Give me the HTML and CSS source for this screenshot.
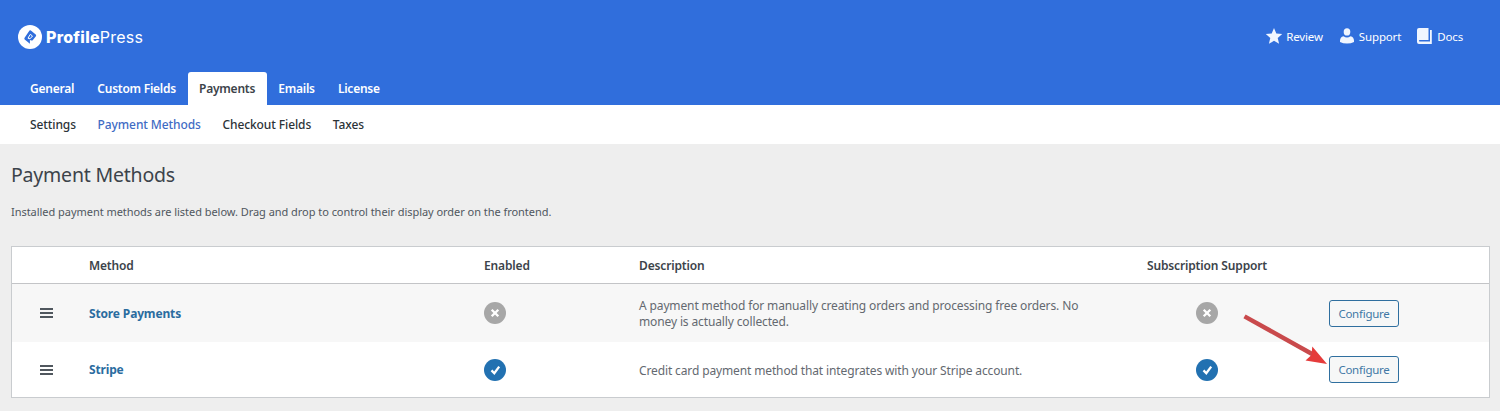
FILE: index.html
```html
<!DOCTYPE html>
<html lang="en">
<head>
  <meta charset="UTF-8" />
  <meta name="viewport" content="width=device-width, initial-scale=1.0"/>
  <title>Payment Methods - ProfilePress</title>
  <link rel="stylesheet" href="styles.css">
</head>
<body>
  <!-- Header -->
  <header class="header">
    <div class="topbar">
      <a href="#" class="logo">
        <svg width="24" height="24" viewBox="0 0 24 24">
          <circle cx="12" cy="12" r="12" fill="#fff"/>
          <path d="M11.500 5.500q.7-.5 1.400 0l4.800 3.900q.9.800.2 1.800l-3 3.700q-.6.700-1.500.5l-1.500-.3v3.600l-5.200-4.200q-.8-.7-.1-1.700z" fill="#306edc"/>
          <path d="M12.300 9.300l2.200 1.700-2.500 2.800-2-.6z" fill="#306edc" stroke="#fff" stroke-width="1"/>
        </svg>
        <span class="brand"><b>Profile</b>Press</span>
      </a>
      <nav class="links">
        <a href="#"><svg width="18" height="18" viewBox="0 0 18 18"><path d="M9 1l2.300 5.500 5.900.5-4.500 3.900 1.400 5.900L9 13.700l-5.100 3.100 1.400-5.900L.8 7l5.900-.5z"/></svg>Review</a>
        <a href="#"><svg width="18" height="18" viewBox="0 0 18 18"><ellipse cx="9" cy="4.900" rx="3.300" ry="3.700"/><path d="M5.500 9.200Q9 11.600 12.500 9.200q3.500.8 3.500 4.600v1.300q-3 1.500-7 1.500t-7-1.500v-1.300q0-3.800 3.500-4.600z"/></svg>Support</a>
        <a href="#"><svg width="18" height="18" viewBox="0 0 18 18"><path d="M3 1h9.500v12H3.800q-.9 0-.9.800t.9.800H14V3h1.800v14H3q-2 0-2-2V3q0-2 2-2z"/></svg>Docs</a>
      </nav>
    </div>
    <nav class="tabs">
      <a href="#">General</a>
      <a href="#">Custom Fields</a>
      <a href="#" class="active">Payments</a>
      <a href="#">Emails</a>
      <a href="#">License</a>
    </nav>
  </header>

  <nav class="subtabs">
    <a href="#">Settings</a>
    <a href="#" class="active">Payment Methods</a>
    <a href="#">Checkout Fields</a>
    <a href="#">Taxes</a>
  </nav>

  <!-- Content -->
  <main class="content">
    <h1>Payment Methods</h1>
    <p class="intro">Installed payment methods are listed below. Drag and drop to control their display order on the frontend.</p>

    <div class="table">
      <div class="row head">
        <span></span>
        <span>Method</span>
        <span>Enabled</span>
        <span>Description</span>
        <span>Subscription Support</span>
        <span></span>
      </div>
      <div class="row alt">
        <span class="handle"><i></i><i></i><i></i></span>
        <a href="#" class="name">Store Payments</a>
        <span class="status"><svg width="22" height="22" viewBox="0 0 22 22"><circle cx="11" cy="11" r="11" fill="#a7a7a7"/><path d="M7.700 7.700l6.600 6.600M14.300 7.700l-6.600 6.600" stroke="#fff" stroke-width="2.300"/></svg></span>
        <span class="desc">A payment method for manually creating orders and processing free orders. No<br>money is actually collected.</span>
        <span class="status center"><svg width="22" height="22" viewBox="0 0 22 22"><circle cx="11" cy="11" r="11" fill="#a7a7a7"/><path d="M7.700 7.700l6.600 6.600M14.300 7.700l-6.600 6.600" stroke="#fff" stroke-width="2.300"/></svg></span>
        <a href="#" class="button">Configure</a>
      </div>
      <div class="row">
        <span class="handle"><i></i><i></i><i></i></span>
        <a href="#" class="name">Stripe</a>
        <span class="status"><svg width="22" height="22" viewBox="0 0 22 22"><circle cx="11" cy="11" r="11" fill="#2271b1"/><path d="M7.500 11.400l2.800 2.900 4.900-6.700" fill="none" stroke="#fff" stroke-width="2.300"/></svg></span>
        <span class="desc">Credit card payment method that integrates with your Stripe account.</span>
        <span class="status center"><svg width="22" height="22" viewBox="0 0 22 22"><circle cx="11" cy="11" r="11" fill="#2271b1"/><path d="M7.500 11.400l2.800 2.900 4.900-6.700" fill="none" stroke="#fff" stroke-width="2.300"/></svg></span>
        <a href="#" class="button">Configure</a>
      </div>
    </div>
  </main>

  <!-- Arrow over the table -->
  <svg class="arrow" width="90" height="54" viewBox="0 0 90 54">
    <path d="M4.500 3.300L73 41.500" stroke="#c94a4c" stroke-width="4.400"/>
    <path d="M87 51L65.500 47.500l6-5.500.8-8.500z" fill="#e53b3b"/>
  </svg>
</body>
</html>
```

FILE: styles.css
```css
body {
  font-family: "Noto Sans", "Open Sans", sans-serif;
  font-size: 12px;
  background: #eeeeee;
  color: #3c434a;
  margin: 0;
  height: 411px;
  position: relative;
  overflow: hidden;
}
a {
  color: inherit;
  text-decoration: none;
}
.header {
  background: #306edc;
  color: #fff;
}
.topbar {
  height: 72px;
  box-sizing: border-box;
  padding: 0 37px 0 18px;
  display: flex;
  justify-content: space-between;
  align-items: center;
}
.logo {
  display: flex;
  align-items: center;
  gap: 4px;
  padding-top: 1px;
}
.brand {
  font-family: Inter, sans-serif;
  font-size: 16px;
  line-height: 24px;
  letter-spacing: 0.25px;
}
.brand b {
  font-weight: 800;
}
.links {
  display: flex;
  gap: 15px;
  font-size: 11.5px;
  letter-spacing: -0.15px;
}
.links a {
  display: flex;
  align-items: center;
  gap: 3px;
}
.links svg {
  fill: #f0f6ff;
}
.tabs, .subtabs {
  display: flex;
  font-weight: 600;
}
.tabs {
  height: 33px;
  padding-left: 18.5px;
  letter-spacing: -0.25px;
}
.tabs a {
  line-height: 33px;
  padding: 0 11.6px;
}
.tabs .active {
  background: #fff;
  color: #3c434a;
  border-radius: 3px 3px 0 0;
}
.subtabs {
  background: #fff;
  color: #2c3338;
  height: 39px;
  line-height: 39px;
  gap: 21.7px;
  padding-left: 30px;
  font-weight: 500;
  letter-spacing: -0.1px;
}
.subtabs .active {
  color: #3f6cc4;
}
.content {
  padding: 0 10px 0 11px;
}
h1 {
  font-size: 19.5px;
  font-weight: 400;
  line-height: 28px;
  letter-spacing: -0.2px;
  margin: 17px 0 0;
  color: #3c434a;
}
.intro {
  font-size: 11px;
  line-height: 18px;
  letter-spacing: -0.04px;
  margin: 14px 0 25px;
  color: #50575e;
}
.table {
  background: #fff;
  border: 1px solid #c9cccf;
  height: 152px;
  box-sizing: border-box;
}
.row {
  display: grid;
  grid-template-columns: 77px 395px 155px 1fr 120px 222px;
  align-items: center;
  height: 55px;
}
.head {
  height: 36px;
  border-bottom: 1px solid #c3c4c7;
  font-weight: 600;
  letter-spacing: -0.15px;
  white-space: nowrap;
}
.alt {
  height: 58px;
  background: #f7f7f7;
}
.status {
  display: flex;
}
.center {
  justify-content: center;
}
.handle {
  display: flex;
  flex-direction: column;
  gap: 2px;
  padding-left: 28px;
}
.handle i {
  width: 13px;
  height: 2px;
  background: #50575e;
}
.name {
  color: #2b6c9f;
  font-weight: 700;
  letter-spacing: -0.15px;
}
.desc {
  color: #646970;
  line-height: 16px;
  letter-spacing: -0.13px;
  padding-top: 2px;
}
.button {
  box-sizing: border-box;
  width: 70px;
  height: 27px;
  margin-left: 62px;
  font-size: 11.5px;
  line-height: 26px;
  letter-spacing: -0.25px;
  border: 1px solid #2f6f9f;
  border-radius: 3px;
  background: #f6f7f7;
  color: #3f77a5;
  text-align: center;
}
.arrow {
  position: absolute;
  left: 1240px;
  top: 313px;
}
```
